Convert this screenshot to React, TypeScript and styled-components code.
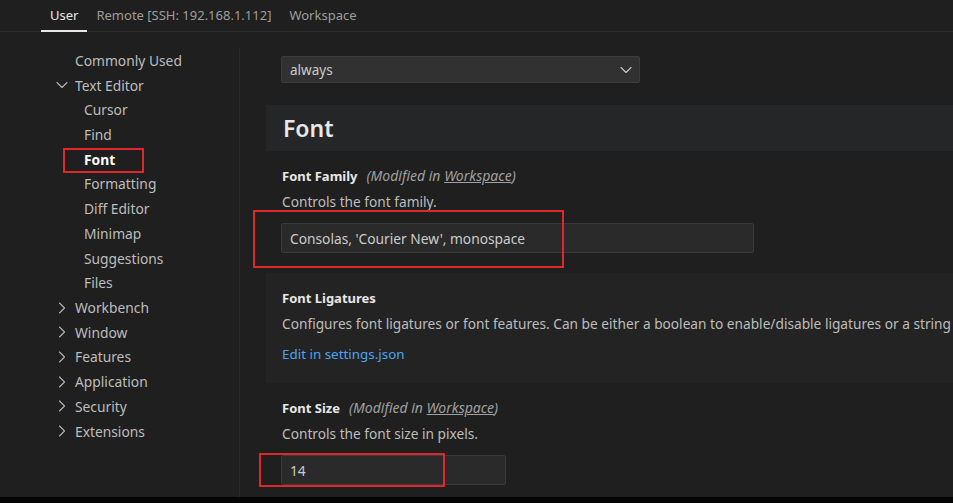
import React from "react";
import styled, { createGlobalStyle } from "styled-components";
import { ChevronDown, ChevronRight } from "lucide-react";

const Global = createGlobalStyle`
  html, body { margin: 0; padding: 0; background: #1f1f1f; overflow: hidden; }
  body { font-family: "Noto Sans", "Open Sans", sans-serif; font-size: 13px; color: #cccccc; }
`;

const Page = styled.div`
  position: relative;
  width: 953px;
  height: 503px;
  display: flex;
  flex-direction: column;
  background: #1f1f1f;
  overflow: hidden;
`;

const TabBar = styled.div`
  height: 32px;
  flex: none;
  display: flex;
  padding-left: 41px;
  border-bottom: 1px solid #2b2b2b;
  box-sizing: border-box;
`;

const Tab = styled.div<{ $active?: boolean }>`
  height: 32px;
  box-sizing: border-box;
  padding: 0 9px;
  display: flex;
  align-items: center;
  font-size: 13px;
  color: ${(p) => (p.$active ? "#e7e7e7" : "#9d9d9d")};
  border-bottom: 2px solid ${(p) => (p.$active ? "#e7e7e7" : "transparent")};
  white-space: nowrap;
`;

const Body = styled.div`
  flex: 1;
  display: flex;
  min-height: 0;
`;

const BottomStrip = styled.div`
  height: 6px;
  flex: none;
  background: #050505;
`;

const Sidebar = styled.div`
  width: 239px;
  flex: none;
  margin-top: 16px;
  border-right: 1px solid #2b2b2b;
  display: flex;
  flex-direction: column;
`;

const NavItem = styled.div<{ $indent: number; $active?: boolean }>`
  height: 24.73px;
  flex: none;
  display: flex;
  align-items: center;
  padding-left: ${(p) => p.$indent}px;
  font-size: 13.8px;
  color: ${(p) => (p.$active ? "#ffffff" : "#bdbdbd")};
  font-weight: ${(p) => (p.$active ? 700 : 400)};
  white-space: nowrap;
`;

const Chev = styled.span`
  width: 23px;
  display: flex;
  align-items: center;
  color: #b5b5b5;
`;

const Content = styled.div`
  flex: 1;
  min-width: 0;
  padding-left: 26px;
  padding-top: 24px;
  display: flex;
  flex-direction: column;
  overflow: hidden;
`;

const SelectRow = styled.div`
  flex: none;
  padding-left: 15px;
`;

const Select = styled.div`
  width: 359px;
  height: 27px;
  box-sizing: border-box;
  background: #313131;
  border: 1px solid #3c3c3c;
  border-radius: 2px;
  display: flex;
  align-items: center;
  justify-content: space-between;
  padding: 0 3px 0 8px;
  color: #cccccc;
  font-size: 13.5px;
`;

const SectionHeader = styled.div`
  flex: none;
  margin-top: 22px;
  height: 46px;
  background: #252627;
  display: flex;
  align-items: center;
  padding-left: 17px;
  font-size: 23px;
  font-weight: 600;
  color: #e7e7e7;
`;

const Setting = styled.div<{ $focused?: boolean }>`
  flex: none;
  padding: 16px 0 20px 16px;
  background: ${(p) => (p.$focused ? "#232323" : "transparent")};
  display: flex;
  flex-direction: column;
  align-items: flex-start;
  white-space: nowrap;
`;

const Title = styled.div`
  line-height: 18px;
  font-size: 13px;
  font-weight: 700;
  color: #e7e7e7;
`;

const Modified = styled.span`
  margin-left: 9px;
  font-size: 14px;
  font-weight: 400;
  font-style: italic;
  color: #a0a0a0;
  u { text-decoration: underline; }
`;

const Desc = styled.div`
  margin-top: 8px;
  line-height: 18px;
  font-size: 13.7px;
  color: #bdbdbd;
`;

const TextInput = styled.div<{ $width: number }>`
  margin-top: 12px;
  margin-left: -1px;
  width: ${(p) => p.$width}px;
  height: 30px;
  box-sizing: border-box;
  background: #2a2a2a;
  border: 1px solid #3a3a3a;
  border-radius: 2px;
  display: flex;
  align-items: center;
  padding-left: 8px;
  color: #cccccc;
  font-size: 13.75px;
`;

const Link = styled.div`
  margin-top: 12px;
  line-height: 18px;
  font-size: 13.4px;
  color: #4da3f0;
`;

const Annotation = styled.div<{ $x: number; $y: number; $w: number; $h: number }>`
  position: absolute;
  left: ${(p) => p.$x}px;
  top: ${(p) => p.$y}px;
  width: ${(p) => p.$w}px;
  height: ${(p) => p.$h}px;
  box-sizing: border-box;
  border: 2px solid #e0282c;
  pointer-events: none;
`;

type Nav = { label: string; level: 0 | 1; chevron?: "down" | "right"; active?: boolean };

const nav: Nav[] = [
  { label: "Commonly Used", level: 0 },
  { label: "Text Editor", level: 0, chevron: "down" },
  { label: "Cursor", level: 1 },
  { label: "Find", level: 1 },
  { label: "Font", level: 1, active: true },
  { label: "Formatting", level: 1 },
  { label: "Diff Editor", level: 1 },
  { label: "Minimap", level: 1 },
  { label: "Suggestions", level: 1 },
  { label: "Files", level: 1 },
  { label: "Workbench", level: 0, chevron: "right" },
  { label: "Window", level: 0, chevron: "right" },
  { label: "Features", level: 0, chevron: "right" },
  { label: "Application", level: 0, chevron: "right" },
  { label: "Security", level: 0, chevron: "right" },
  { label: "Extensions", level: 0, chevron: "right" },
];

export default function App() {
  return (
    <Page>
      <Global />
      <TabBar>
        <Tab $active>User</Tab>
        <Tab>Remote [SSH: 192.168.1.112]</Tab>
        <Tab>Workspace</Tab>
      </TabBar>
      <Body>
        <Sidebar>
          {nav.map((n) => (
            <NavItem
              key={n.label}
              $indent={n.chevron ? 52 : n.level === 0 ? 75 : 84}
              $active={n.active}
            >
              {n.chevron && (
                <Chev>
                  {n.chevron === "down" ? (
                    <ChevronDown size={20} strokeWidth={1.3} />
                  ) : (
                    <ChevronRight size={20} strokeWidth={1.3} />
                  )}
                </Chev>
              )}
              {n.label}
            </NavItem>
          ))}
        </Sidebar>
        <Content>
          <SelectRow>
            <Select>
              <span>always</span>
              <ChevronDown size={20} strokeWidth={1.4} color="#c5c5c5" />
            </Select>
          </SelectRow>
          <SectionHeader>Font</SectionHeader>
          <Setting>
            <Title>
              Font Family
              <Modified>
                (Modified in <u>Workspace</u>)
              </Modified>
            </Title>
            <Desc>Controls the font family.</Desc>
            <TextInput $width={473}>Consolas, 'Courier New', monospace</TextInput>
          </Setting>
          <Setting $focused>
            <Title>Font Ligatures</Title>
            <Desc>
              Configures font ligatures or font features. Can be either a boolean to enable/disable
              ligatures or a string
            </Desc>
            <Link>Edit in settings.json</Link>
          </Setting>
          <Setting>
            <Title>
              Font Size
              <Modified>
                (Modified in <u>Workspace</u>)
              </Modified>
            </Title>
            <Desc>Controls the font size in pixels.</Desc>
            <TextInput $width={225}>14</TextInput>
          </Setting>
        </Content>
      </Body>
      <BottomStrip />
      <Annotation $x={63} $y={148} $w={81} $h={25} />
      <Annotation $x={253} $y={210} $w={311} $h={58} />
      <Annotation $x={259} $y={453} $w={186} $h={34} />
    </Page>
  );
}
